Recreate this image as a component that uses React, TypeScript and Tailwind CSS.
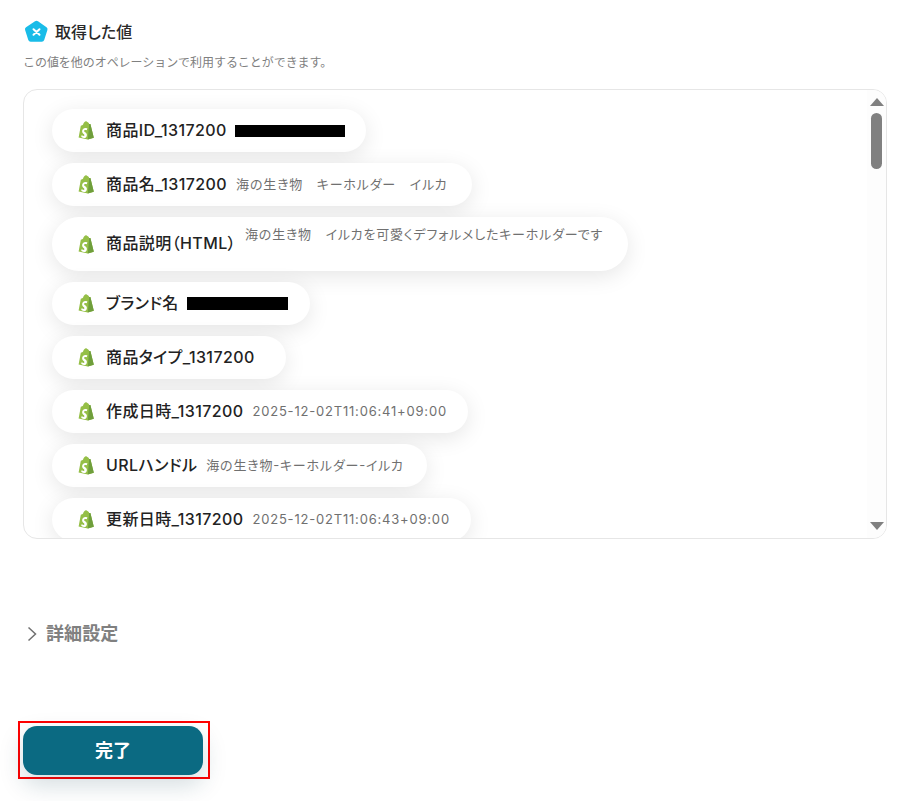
const font = { fontFamily: '"Inter", "Noto Sans CJK JP", sans-serif' };

function Shopify() {
  return (
    <svg width="16" height="19" viewBox="0 0 16 19" className="shrink-0">
      <path d="M.6 16.400 2.800 4.800C3.800 4.400 4.600 4.100 5 3.700 5.600 1.500 6.900.3 8 .3c.7 0 1 .3 1.300.8.900 0 1.600 1 1.900 2l1.200-.2L15.800 16.800 9.800 18.600Z" fill="#95bf47" />
      <path d="M11.200 3.100 12.400 2.900l3.400 13.900-6 1.800Z" fill="#6f9e3c" />
      <path d="M9.400 7.300 8.800 9.300c-.5-.3-1-.4-1.500-.4-1.300 0-1.300.9-1.300 1.100 0 1 2.900 1.500 2.900 3.900 0 1.900-1.200 3.100-2.800 3.100-1.900 0-2.900-1.200-2.900-1.200l.5-1.700s1 .9 1.900.9c.5 0 .8-.4.8-.8 0-1.400-2.300-1.400-2.300-3.700C4.100 8.100 5.500 6.900 7.500 6.900c.9 0 1.900.4 1.900.4Z" fill="#fff" />
    </svg>
  );
}

function Chip({ label, value, redact, width, tall }: { label: string; value?: string; redact?: number; width: number; tall?: boolean }) {
  return (
    <div
      className={`flex items-center rounded-[28px] bg-white pl-[26px] shadow-[0_5px_22px_rgba(0,0,0,0.1)] shrink-0 ${tall ? 'h-[54px]' : 'h-[43px]'}`}
      style={{ width }}
    >
      <Shopify />
      <span className="mb-[2px] ml-[12px] whitespace-nowrap text-[16px] font-medium leading-[20px] tracking-[0.4px] text-[#222222] [font-feature-settings:'palt']">{label}</span>
      {value && (
        <span className={`whitespace-nowrap text-[13px] leading-[18px] tracking-[0.8px] text-[#707070] [font-feature-settings:'palt'] ${tall ? 'mb-[20px] ml-[9px]' : 'mb-[2px] ml-[9px]'}`}>{value}</span>
      )}
      {redact && <span className={`bg-black ${redact === 101 ? 'ml-[8px] h-[13px]' : 'ml-[8px] h-[12px]'}`} style={{ width: redact }} />}
    </div>
  );
}

export default function App() {
  return (
    <div className="h-[801px] w-[913px] overflow-hidden bg-white" style={font}>
      <div className="flex h-[63px] flex-col pl-[23px] pt-[20px]">
        <div className="flex h-[24px] items-center gap-[6px] pl-[1px]">
          <svg width="25" height="24" viewBox="0 0 25 24">
            <path d="M11 1.200a2.500 2.500 0 0 1 3 0l8.500 6.100a2.500 2.500 0 0 1 .9 2.800l-3.200 10a2.500 2.500 0 0 1-2.400 1.700H6.700a2.500 2.500 0 0 1-2.400-1.700l-3.200-10a2.500 2.500 0 0 1 .9-2.800Z" fill="#19bce8" />
            <path d="M9.500 9.200 15.500 14.800M15.500 9.200 9.500 14.800" stroke="#fff" strokeWidth="2" strokeLinecap="round" />
          </svg>
          <span className="text-[16px] font-medium leading-[24px] tracking-[0.1px] text-[#2a2a2a] [font-feature-settings:'palt']">取得した値</span>
        </div>
        <p className="mt-[10px] text-[12px] leading-[18px] tracking-[-0.05px] text-[#808080]">この値を他のオペレーションで利用することができます。</p>
      </div>

      <div className="relative ml-[23px] mt-[26px] h-[450px] w-[864px] overflow-hidden rounded-[14px] border border-[#e6e6e6]">
        <div className="flex flex-col gap-[11px] pl-[28px] pt-[19px]">
          <Chip label="商品ID_1317200" redact={110} width={314} />
          <Chip label="商品名_1317200" value="海の生き物　キーホルダー　イルカ" width={420} />
          <Chip label="商品説明（HTML）" value="海の生き物　イルカを可愛くデフォルメしたキーホルダーです" width={576} tall />
          <Chip label="ブランド名" redact={101} width={258} />
          <Chip label="商品タイプ_1317200" width={234} />
          <Chip label="作成日時_1317200" value="2025-12-02T11:06:41+09:00" width={416} />
          <Chip label="URLハンドル" value="海の生き物-キーホルダー-イルカ" width={375} />
          <Chip label="更新日時_1317200" value="2025-12-02T11:06:43+09:00" width={419} />
        </div>
        <div className="absolute right-0 top-0 flex h-full w-[19px] flex-col items-center bg-[#fdfdfd]">
          <div className="mt-[8px] h-0 w-0 border-x-[7px] border-b-[8px] border-x-transparent border-b-[#808080]" />
          <div className="mt-[7px] h-[56px] w-[11px] rounded-full bg-[#808080]" />
          <div className="mt-auto mb-[8px] h-0 w-0 border-x-[7px] border-t-[8px] border-x-transparent border-t-[#808080]" />
        </div>
      </div>

      <div className="ml-[26px] mt-[83px] flex h-[24px] items-center gap-[8px]">
        <svg width="12" height="16" viewBox="0 0 12 16" fill="none">
          <path d="M2.500 1.500 9.500 8 2.500 14.500" stroke="#707070" strokeWidth="1.500" />
        </svg>
        <span className="text-[18px] font-semibold leading-[24px] tracking-[0.1px] text-[#808080]">詳細設定</span>
      </div>

      <div className="ml-[18px] mt-[75px] h-[58px] w-[192px] border-2 border-[#ff0000] p-[3px]">
        <button className="flex h-[49px] w-[180px] items-center justify-center rounded-[14px] bg-[#0b6a82] text-[18px] font-bold text-white shadow-[0_10px_24px_rgba(11,60,80,0.18)]">
          完了
        </button>
      </div>
    </div>
  );
}
